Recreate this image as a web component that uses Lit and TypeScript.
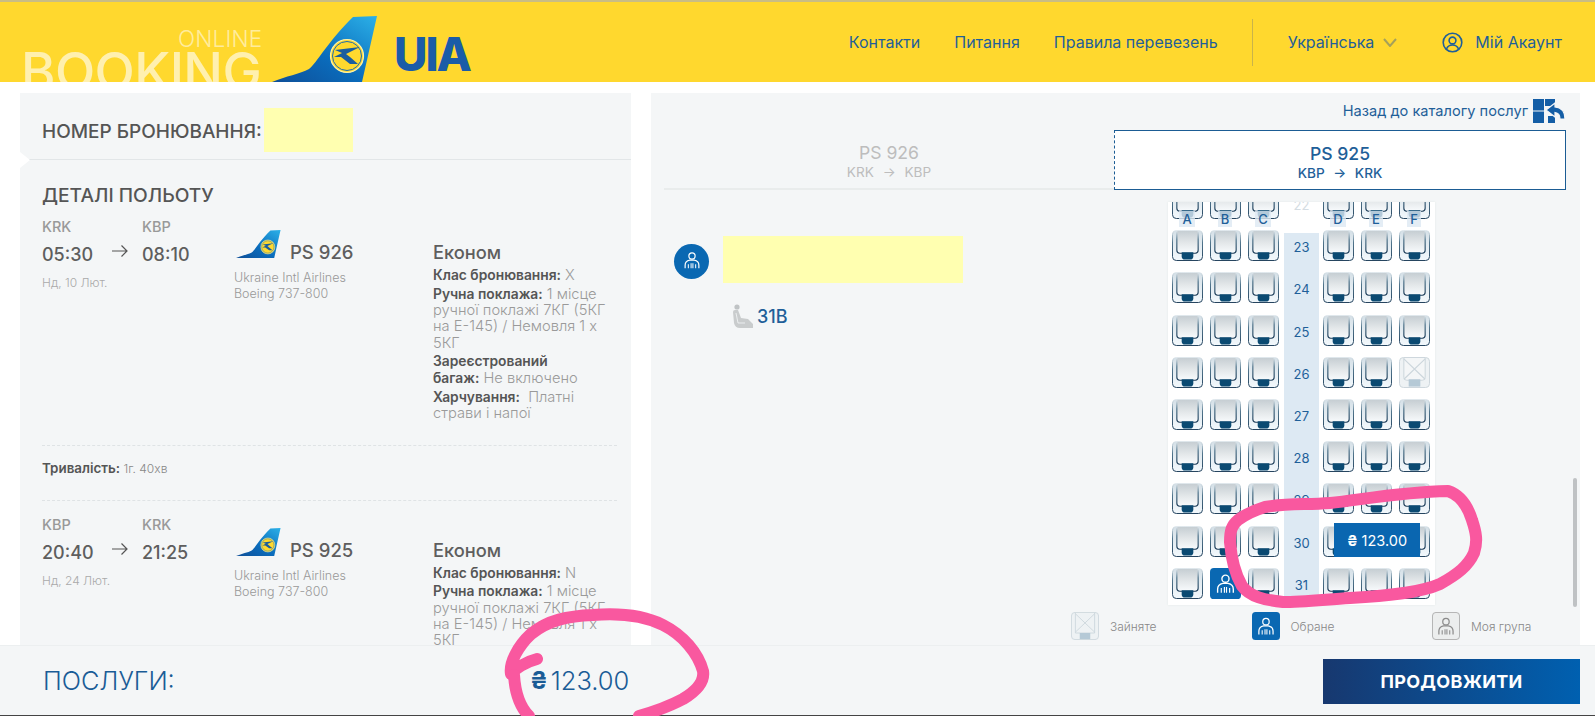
import { LitElement, html, css, svg } from "lit";
import { customElement } from "lit/decorators.js";

const tail = svg`
  <path d="M0 66 C14 60 28 58 37 53 C45 47 56 25 81 1 L105 0 L90 66 Z" fill="url(#tailGrad)"/>
  <circle cx="75" cy="40" r="16.5" fill="#ffd92e" stroke="#fff3a8" stroke-width="1.2"/>
  <circle cx="75" cy="40" r="14.5" fill="none" stroke="#1c6bb0" stroke-width="1"/>
  <path d="M63 34 L88 31 L74 38 L78 41 L86 48 L78 48 L69 41 L62 41 L70 37 Z" fill="#1a5d9e"/>`;

const seat = html`<svg class="seat" viewBox="0 0 32 32">
  <rect x=".5" y=".5" width="31" height="31" rx="4" fill="url(#seatArm)" stroke="url(#seatLine)"/>
  <path d="M5 1V21Q5 24 8 24H24Q27 24 27 21V1" fill="url(#seatBody)" stroke="url(#seatLine)" stroke-width="1.2"/>
  <path d="M10 23H22V27Q22 30.5 18.5 30.5H13.5Q10 30.5 10 27Z" fill="#0b4a72"/>
</svg>`;

const person = (c: string) => svg`
  <circle cx="12" cy="6.5" r="3.4" fill="none" stroke="${c}" stroke-width="1.3"/>
  <path d="M4.5 20V16.5Q4.5 12 9.5 11H14.5Q19.5 12 19.5 16.5V20" fill="none" stroke="${c}" stroke-width="1.3"/>
  <path d="M8 15.5V20M11 14.5V20M13 14.5V20M16 15.5V20" stroke="${c}" stroke-width="1.1"/>`;

const occupied = html`<svg class="seat" viewBox="0 0 32 32">
  <rect x=".5" y=".5" width="31" height="31" rx="4" fill="#eef2f4" stroke="#ccd6dc"/>
  <path d="M5 1V21Q5 24 8 24H24Q27 24 27 21V1" fill="#f4f6f7" stroke="#ccd6dc"/>
  <path d="M5 2L27 23M27 2L5 23" stroke="#ccd6dc" stroke-width="1.2"/>
  <path d="M10 23H22V30.5H10Z" fill="#b5c9d6"/>
</svg>`;

const selected = html`<svg class="seat" viewBox="0 0 32 32">
  <rect width="32" height="32" rx="4" fill="#0a68b2"/>
  <g transform="translate(3 4) scale(1.08)">${person("#fff")}</g>
</svg>`;

const flights = [
  { from: "KRK", to: "KBP", dep: "05:30", arr: "08:10", date: "Нд, 10 Лют.", no: "PS 926", cls: "X" },
  { from: "KBP", to: "KRK", dep: "20:40", arr: "21:25", date: "Нд, 24 Лют.", no: "PS 925", cls: "N" },
];

const rows = [22, 23, 24, 25, 26, 27, 28, 29, 30, 31];

@customElement("app-root")
export class AppRoot extends LitElement {
  static styles = css`
    :host { display: flex; flex-direction: column; height: 100vh; overflow: hidden; position: relative;
      font-family: Inter, "Noto Sans", sans-serif; color: #555; background: #fff; }
    .topbar { flex: none; height: 82px; box-sizing: border-box; background: #ffd82e; border-top: 2px solid #c9bd84;
      display: flex; overflow: hidden; position: relative; color: #1f5f99; font-size: 16px; }
    .brand { width: 272px; flex: none; position: relative; }
    .online { position: absolute; left: 178px; top: 25px; font-size: 22.5px; font-weight: 300; color: rgba(255,255,255,.55); line-height: 24px; letter-spacing: .2px; }
    .booking { position: absolute; left: 21px; top: 39px; font-size: 52.5px; line-height: 60px; font-weight: 500; color: rgba(255,255,255,.62); letter-spacing: -.6px; }
    .tail { width: 106px; height: 66px; margin-top: 14px; flex: none; display: block; }
    .uia { margin-left: 16px; margin-top: 27px; font-size: 46px; line-height: 50px; font-weight: 800; color: #1a5ca8; letter-spacing: -2px; flex: none; }
    .nav { margin-left: auto; display: flex; align-items: center; height: 80px; padding-right: 33px; white-space: nowrap; }
    .nav a { margin-right: 34px; font-weight: 400; }
    .sep { width: 1px; height: 47px; background: #c9b34a; margin: 0 35px 0 0; }
    .nav .lang { margin-right: 9px; }
    .chev { width: 14px; height: 9px; margin-right: 45px; }
    .user { width: 21px; height: 21px; margin-right: 12px; }
    .nav .acct { margin-right: 0; }

    .main { flex: 1; min-height: 0; display: flex; padding: 11px 15px 0 20px; gap: 20px; }
    .left { width: 611px; flex: none; background: #f4f6f7; overflow: hidden; position: relative; }
    .bookrow { height: 67px; box-sizing: border-box; display: flex; align-items: flex-start; padding: 15px 0 0 22px; border-bottom: 1px solid #e2e6e8; }
    .bookrow span { font-size: 19px; font-weight: 500; margin-top: 14px; line-height: 20px; }
    .mask { width: 89px; height: 44px; background: #ffffb0; margin-top: 0; }
    .bookrow .mask { margin-left: 2px; }
    .notch { position: absolute; left: 0; top: 59px; width: 10px; height: 16px; display: block; }
    .details { padding: 24px 14px 0 22px; }
    .h { font-size: 19.2px; font-weight: 500; line-height: 22px; }
    .flight { display: flex; }
    .c1 { width: 192px; flex: none; }
    .codes, .times { display: grid; grid-template-columns: 100px 60px; }
    .codes { font-size: 14.5px; font-weight: 500; color: #999; line-height: 16px; }
    .times { font-size: 18px; font-weight: 500; line-height: 22px; margin-top: 9px; position: relative; color: #5e5e5e; }
    .arrow { position: absolute; left: 70px; top: 0; width: 16px; height: 14px; }
    .date { font-size: 12px; color: #aaa; margin-top: 10px; font-weight: 300; line-height: 14px; }
    .c2 { width: 199px; flex: none; }
    .carrier { display: flex; align-items: center; height: 30px; padding-left: 2px; margin-top: 10px; }
    .carrier svg { width: 45px; height: 28px; display: block; }
    .carrier span { font-size: 18.5px; font-weight: 500; margin-left: 9px; margin-top: 16px; color: #5e5e5e; }
    .air { font-size: 12.5px; font-weight: 300; color: #999; line-height: 16px; margin-top: 11px; }
    .c3 { flex: 1; font-size: 14.7px; line-height: 16.3px; color: #9a9a9a; font-weight: 300; padding-top: 22px; }
    .c3 h4 { margin: 0 0 4px; font-size: 18.3px; line-height: 22px; font-weight: 500; color: #5e5e5e; }
    .c3 b { font-weight: 600; color: #555; font-size: 13.8px; }
    .c3 p { margin: 0 0 2.5px; white-space: nowrap; }
    .dash { border-top: 1px dashed #dfe3e5; }
    .f1 { margin-top: 13px; }
    .f1-end { margin-top: 21px; }
    .dur { font-size: 12px; color: #888; height: 54px; line-height: 45px; font-weight: 300; }
    .dur b { font-weight: 600; color: #555; font-size: 13.4px; }
    .f2 { margin-top: 16px; }

    .right { flex: 1; background: #f4f6f7; overflow: hidden; position: relative; display: flex; flex-direction: column; }
    .back { display: flex; justify-content: flex-end; align-items: center; height: 37px; padding-right: 14px; color: #1f5f99; font-size: 14.6px; box-sizing: border-box; padding-bottom: 1px; }
    .back svg { width: 33px; height: 24px; margin-left: 5px; }
    .tabs { display: flex; padding-left: 13px; height: 60px; }
    .tab { text-align: center; box-sizing: border-box; }
    .tab.off { width: 450px; color: #bdbdbd; border-bottom: 2px solid #e9ecec; height: 60px; }
    .tab.on { width: 452px; color: #1f5f99; background: #fff; border: 1px solid #1b5c94; border-left-style: dashed; }
    .tab .no { font-size: 17.6px; line-height: 20px; margin-top: 13px; }
    .tab.off .no { font-weight: 400; }
    .tab.on .no { font-weight: 500; }
    .tab .rt { font-size: 13.6px; line-height: 16px; margin-top: 1px; font-weight: 500; word-spacing: 5px; }
    .tab.off .rt { font-weight: 400; }
    .body { display: flex; flex: none; }
    .pax { width: 517px; flex: none; padding-left: 23px; box-sizing: border-box; }
    .paxrow { display: flex; align-items: center; margin-top: 46px; }
    .circle { width: 35px; height: 35px; border-radius: 50%; background: #0a68b2; flex: none; display: flex; align-items: center; justify-content: center; margin-top: 3px; }
    .circle svg { width: 22px; height: 22px; }
    .paxrow .name { width: 240px; height: 47px; background: #ffffb0; margin-left: 14px; }
    .paxseat { display: flex; align-items: center; margin: 21px 0 0 57px; color: #1f5f99; font-size: 18px; font-weight: 500; }
    .paxseat svg { width: 23px; height: 25px; margin-right: 3px; }

    .map { width: 267px; height: 403px; margin-top: 12px; background: #fff; position: relative; overflow: hidden; box-shadow: 0 0 2px #e2e6e8; }
    .mapin { margin-top: -19px; }
    .row { display: flex; height: 42.2px; }
    .cell { width: 38px; flex: none; padding: 5px 0 0 3.5px; box-sizing: border-box; }
    .seat { width: 31px; height: 31px; display: block; }
    .num { width: 35px; flex: none; margin-left: 2px; padding-top: 2px; box-sizing: border-box; background: #dde9f3; display: flex; align-items: center; justify-content: center; color: #1f5f99; font-size: 13px; font-weight: 400; }
    .num.faint { background: #fff; color: #d5dde3; }
    .num.first { background: linear-gradient(#fff 8px, #dde9f3 8px); }
    .num.last { background: linear-gradient(#dde9f3 36px, #fff 36px); }
    .letters { position: absolute; left: 0; top: 9px; display: flex; height: 16px; font-size: 13px; font-weight: 500; color: #1f5f99; }
    .letters span { width: 38px; text-align: center; line-height: 16px; }
    .letters i { width: 37px; }
    .letters span b { font-weight: 500; background: #dde9f3cc; padding: 0 3px; }
    .price { position: absolute; left: 166px; top: 321px; width: 86px; height: 34px; background: #0a66b0; color: #fff; font-size: 14.5px; display: flex; align-items: center; justify-content: center; font-weight: 400; }
    .price b { font-weight: 700; margin-right: 4px; }

    .legend { display: flex; padding: 7px 0 0 420px; font-size: 12px; color: #888; font-weight: 300; }
    .legend div { width: 180.5px; display: flex; align-items: center; flex: none; }
    .legend svg { width: 28px; height: 28px; margin-right: 11px; flex: none; }
    .scroll { position: absolute; right: 3px; top: 385px; width: 4px; height: 129px; background: #bfc2c4; border-radius: 2px; }

    .footer { flex: none; height: 71px; box-sizing: border-box; background: #f4f6f7; border-top: 1px solid #eceff0; border-bottom: 1px solid #444; display: flex; align-items: center; padding: 0 15px 0 43px; color: #1a5c96; position: relative; }
    .footer .l { font-size: 25.3px; font-weight: 300; width: 487px; }
    .footer .p { font-size: 25.5px; font-weight: 300; display: flex; align-items: center; }
    .footer .p b { font-weight: 700; margin-right: 3px; font-size: 24px; }
    .btn { margin-left: auto; width: 257px; height: 45px; background: linear-gradient(90deg, #17386f, #0060b0); color: #fff; font-size: 18px; font-weight: 700; display: flex; align-items: center; justify-content: center; letter-spacing: .3px; margin-top: 2px; }
    .ink { position: absolute; left: 0; top: 0; width: 1595px; height: 716px; pointer-events: none; }
    .defs { display: block; width: 0; height: 0; }
  `;

  private flight(f: (typeof flights)[number]) {
    return html`<div class="flight">
      <div class="c1">
        <div class="codes"><span>${f.from}</span><span>${f.to}</span></div>
        <div class="times"><span>${f.dep}</span><span>${f.arr}</span>
          <svg class="arrow" viewBox="0 0 16 14"><path d="M0 7H15M9.5 1.5L15 7L9.5 12.5" fill="none" stroke="#555" stroke-width="1.2"/></svg>
        </div>
        <div class="date">${f.date}</div>
      </div>
      <div class="c2">
        <div class="carrier"><svg viewBox="0 0 106 66">${tail}</svg><span>${f.no}</span></div>
        <div class="air">Ukraine Intl Airlines<br />Boeing 737-800</div>
      </div>
      <div class="c3">
        <h4>Економ</h4>
        <p><b>Клас бронювання:</b> ${f.cls}</p>
        <p><b>Ручна поклажа:</b> 1 місце<br />ручної поклажі 7КГ (5КГ<br />на Е-145) / Немовля 1 х<br />5КГ</p>
        <p><b>Зареєстрований<br />багаж:</b> Не включено</p>
        <p><b>Харчування:</b>&nbsp; Платні<br />страви і напої</p>
      </div>
    </div>`;
  }

  private cellFor(r: number, col: string) {
    if (r === 26 && col === "F") return occupied;
    if (r === 31 && col === "B") return selected;
    return seat;
  }

  render() {
    return html`
      <svg class="defs" width="0" height="0">
        <defs>
          <linearGradient id="tailGrad" x1="0" y1="1" x2="1" y2="0">
            <stop offset="0" stop-color="#0f4f98"/><stop offset=".45" stop-color="#0a6cbc"/><stop offset="1" stop-color="#2cb1e8"/>
          </linearGradient>
          <linearGradient id="seatBody" x1="0" y1="0" x2="0" y2="1">
            <stop offset="0" stop-color="#c6ced3"/><stop offset=".55" stop-color="#e4e8ea"/><stop offset="1" stop-color="#f8fbfd"/>
          </linearGradient>
          <linearGradient id="seatArm" x1="0" y1="0" x2="0" y2="1">
            <stop offset="0" stop-color="#d5e0e7"/><stop offset="1" stop-color="#f2f8fc"/>
          </linearGradient>
          <linearGradient id="seatLine" x1="0" y1="0" x2="0" y2="1">
            <stop offset="0" stop-color="#dfe7ec"/><stop offset=".4" stop-color="#4a7088"/><stop offset="1" stop-color="#1c3c58"/>
          </linearGradient>
        </defs>
      </svg>
      <header class="topbar">
        <div class="brand"><span class="online">ONLINE</span><span class="booking">BOOKING</span></div>
        <svg class="tail" viewBox="0 0 106 66">${tail}</svg>
        <div class="uia">UIA</div>
        <nav class="nav">
          <a>Контакти</a><a>Питання</a><a>Правила перевезень</a>
          <span class="sep"></span>
          <a class="lang">Українська</a>
          <svg class="chev" viewBox="0 0 14 9"><path d="M1 1L7 8L13 1" fill="none" stroke="#a5a05a" stroke-width="2"/></svg>
          <svg class="user" viewBox="0 0 21 21"><circle cx="10.5" cy="10.5" r="9.3" fill="none" stroke="#1f5f99" stroke-width="1.6"/><circle cx="10.5" cy="8.5" r="3.4" fill="none" stroke="#1f5f99" stroke-width="1.6"/><path d="M4.5 17Q6 13 10.5 13T16.5 17" fill="none" stroke="#1f5f99" stroke-width="1.6"/></svg>
          <a class="acct">Мій Акаунт</a>
        </nav>
      </header>
      <div class="main">
        <section class="left">
          <div class="bookrow"><span>НОМЕР БРОНЮВАННЯ:</span><div class="mask"></div></div>
          <svg class="notch" viewBox="0 0 10 16"><path d="M0 0L10 8L0 16Z" fill="#fff"/></svg>
          <div class="details">
            <div class="h">ДЕТАЛІ ПОЛЬОТУ</div>
            <div class="f1">${this.flight(flights[0])}</div>
            <div class="dash f1-end"></div>
            <div class="dur"><b>Тривалість:</b> 1г. 40хв</div>
            <div class="dash"></div>
            <div class="f2">${this.flight(flights[1])}</div>
          </div>
        </section>
        <section class="right">
          <div class="back">Назад до каталогу послуг
            <svg viewBox="0 0 33 24">
              <path d="M0 0H11V11.5H0ZM12 0H22V7H12ZM0 12.5H11V24H0ZM15 17H22V24H15Z" fill="#145ea6"/>
              <path d="M13 11L22 4V8Q32 9 32 20H27Q27 14 22 13.5V18Z" fill="#145ea6" stroke="#f4f6f7" stroke-width="1.2"/>
            </svg>
          </div>
          <div class="tabs">
            <div class="tab off"><div class="no">PS 926</div><div class="rt">KRK → KBP</div></div>
            <div class="tab on"><div class="no">PS 925</div><div class="rt">KBP → KRK</div></div>
          </div>
          <div class="body">
            <div class="pax">
              <div class="paxrow">
                <div class="circle"><svg viewBox="0 0 24 24">${person("#fff")}</svg></div>
                <div class="name"></div>
              </div>
              <div class="paxseat">
                <svg viewBox="0 0 23 25"><circle cx="6" cy="3" r="2.6" fill="#bfc3c5"/><path d="M2 8Q2 6 4 6H7L10 14L17 15L22 20V24H9Q4 24 3 19Z" fill="#c9cccd"/><path d="M5 9L7 19H14" fill="none" stroke="#f4f6f7" stroke-width=".8"/></svg>
                31B
              </div>
            </div>
            <div class="map">
              <div class="mapin">
                ${rows.map(
                  (r, i) => html`<div class="row">
                    ${["A", "B", "C"].map((c) => html`<div class="cell">${this.cellFor(r, c)}</div>`)}
                    <div class="num ${r === 22 ? "faint" : r === 23 ? "first" : i === rows.length - 1 ? "last" : ""}">${r}</div>
                    ${["D", "E", "F"].map((c) => html`<div class="cell">${this.cellFor(r, c)}</div>`)}
                  </div>`,
                )}
              </div>
              <div class="letters">
                <span><b>A</b></span><span><b>B</b></span><span><b>C</b></span><i></i><span><b>D</b></span><span><b>E</b></span><span><b>F</b></span>
              </div>
              <div class="price"><b>₴</b> 123.00</div>
            </div>
          </div>
          <div class="legend">
            <div><svg viewBox="0 0 32 32"><rect x=".5" y=".5" width="31" height="31" rx="4" fill="#eef2f4" stroke="#ccd6dc"/><path d="M5 2L27 23M27 2L5 23M5 1V24H27V1" fill="none" stroke="#ccd6dc"/><path d="M10 24H22V31H10Z" fill="#b5c9d6"/></svg>Зайняте</div>
            <div><svg viewBox="0 0 32 32"><rect width="32" height="32" rx="4" fill="#0a68b2"/><g transform="translate(3 4) scale(1.08)">${person("#fff")}</g></svg>Обране</div>
            <div><svg viewBox="0 0 32 32"><rect x=".5" y=".5" width="31" height="31" rx="4" fill="#eceeee" stroke="#a8a8a8"/><g transform="translate(3 4) scale(1.08)">${person("#8a8a8a")}</g></svg>Моя група</div>
          </div>
          <div class="scroll"></div>
        </section>
      </div>
      <footer class="footer">
        <div class="l">ПОСЛУГИ:</div>
        <div class="p"><b>₴</b>123.00</div>
        <div class="btn">ПРОДОВЖИТИ</div>
      </footer>
      <svg class="ink" viewBox="0 0 1595 716">
        <g fill="none" stroke="#f9589f" stroke-width="12" stroke-linecap="round" stroke-linejoin="round">
          <path d="M1265 507C1290 503 1305 505 1330 503C1360 500 1400 492 1448 491C1460 495 1468 507 1472 520C1476 532 1478 541 1474 553C1468 566 1458 574 1440 584C1420 593 1385 596 1350 598C1320 600 1300 602 1283 602C1265 600 1250 597 1242 586C1234 572 1231 555 1230 542C1230 530 1232 525 1238 520C1246 514 1255 510 1265 507Z"/>
          <path d="M537 659C525 662 515 669 511 674C509 663 518 646 531 634C548 620 568 616 593 615C618 613 643 615 663 625C683 635 698 653 703 671C705 683 693 693 683 699C668 707 653 712 639 716"/>
          <path d="M514 675C515 691 519 706 529 716"/>
        </g>
      </svg>
    `;
  }
}
